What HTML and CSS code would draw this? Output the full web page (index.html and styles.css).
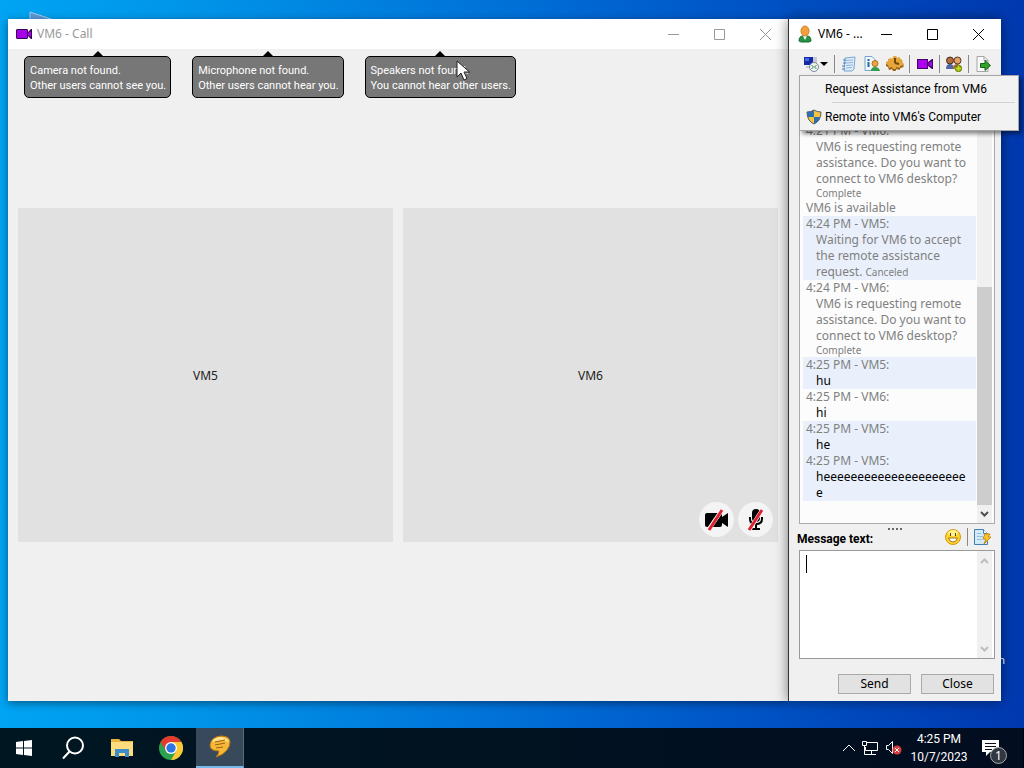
FILE: index.html
```html
<!DOCTYPE html>
<html lang="en">
<head>
<meta charset="utf-8">
<title>VM6 - Call</title>
<link rel="stylesheet" href="styles.css">
</head>
<body>
<main class="desktop">
  <svg class="desk-icon" width="26" height="14" viewBox="0 0 26 14"><path d="M1 13V1l24 8v4z" fill="#5a9bd8" stroke="#a8c8e8"/></svg>
  <span class="desk-label">n</span>

  <section class="window call">
    <header class="titlebar inactive">
      <svg class="app-icon" width="16" height="16" viewBox="0 0 16 16"><path d="M1 3h10l1 1v2l3-3h1v10h-1l-3-3v2l-1 1H1l-1-1V4z" fill="#35004f"/><path d="M1 4h10v8H1zM12 7l3-2v6l-3-2z" fill="#a600e8"/></svg>
      <h1 class="title">VM6 - Call</h1>
      <div class="controls">
        <button aria-label="Minimize"><svg width="11" height="11" viewBox="0 0 11 11"><path d="M0 5.5h11"/></svg></button>
        <button aria-label="Maximize"><svg width="11" height="11" viewBox="0 0 11 11"><path d="M.5.5h10v10H.5z"/></svg></button>
        <button aria-label="Close window"><svg width="11" height="11" viewBox="0 0 11 11"><path d="M0 0l11 11M11 0L0 11"/></svg></button>
      </div>
    </header>
    <div class="call-body">
      <div class="notices">
        <p class="notice">Camera not found.<br>Other users cannot see you.</p>
        <p class="notice">Microphone not found.<br>Other users cannot hear you.</p>
        <p class="notice">Speakers not found.<br>You cannot hear other users.</p>
      </div>
      <div class="tiles">
        <div class="tile">VM5</div>
        <div class="tile">VM6
          <div class="tile-actions">
            <button class="round" aria-label="Camera off"><svg width="36" height="36" viewBox="0 0 36 36"><path d="M8 11h13q2 0 2 2v2l6-4v14l-6-4v2q0 2-2 2H8q-2 0-2-2V13q0-2 2-2z" fill="#000"/><path d="M10 27L23 8" stroke="#fff" stroke-width="4"/><path d="M10 28L23 8" stroke="#e02030" stroke-width="3"/></svg></button>
            <button class="round" aria-label="Microphone off"><svg width="36" height="36" viewBox="0 0 36 36"><rect x="14" y="7" width="8" height="13" rx="4"/><path d="M12 15v2q0 5 6 5t6-5v-2M18 22v5M14 27h8" fill="none" stroke="#000" stroke-width="2"/><path d="M12 27L24 8" stroke="#fff" stroke-width="4"/><path d="M11 28L24 8" stroke="#e02030" stroke-width="3"/></svg></button>
          </div>
        </div>
      </div>
    </div>
  </section>

  <section class="window chat">
    <header class="titlebar">
      <svg class="app-icon" width="16" height="18" viewBox="0 0 16 18"><path d="M2 16q0-5 4-5h4q4 0 4 5l-2 1H4z" fill="#289344" stroke="#176a2d"/><path d="M6 11l2 4 2-4z" fill="#fff"/><ellipse cx="8" cy="6" rx="4" ry="5" fill="#f3a03c" stroke="#c9832c"/></svg>
      <h2 class="title">VM6 - ...</h2>
      <div class="controls">
        <button aria-label="Minimize"><svg width="11" height="11" viewBox="0 0 11 11"><path d="M0 5.5h11"/></svg></button>
        <button aria-label="Maximize"><svg width="11" height="11" viewBox="0 0 11 11"><path d="M.5.5h10v10H.5z"/></svg></button>
        <button aria-label="Close window"><svg width="11" height="11" viewBox="0 0 11 11"><path d="M0 0l11 11M11 0L0 11"/></svg></button>
      </div>
    </header>
    <div class="toolbar">
      <button aria-label="Remote assistance"><svg width="26" height="18" viewBox="0 0 26 18"><path d="M1 2h9v8H1z" fill="#1428a8"/><path d="M2 3h4v3H2z" fill="#3f6be0"/><path d="M10 2h4v9h-4zM3 11h6v2H3z" fill="#c6c8d2"/><circle cx="11" cy="12" r="4.500" fill="#eef3f5" stroke="#7c8d98"/><path d="M8.500 10l2 2-2 2M13.500 10l-2 2 2 2" fill="none" stroke="#3a8a50"/><path d="M17 7h8l-4 4z" fill="#000"/></svg></button>
      <i class="sep"></i>
      <button aria-label="History"><svg width="18" height="18" viewBox="0 0 18 18"><path d="M5 3l10-1-1 12-2 2H4z" fill="#dcecfb" stroke="#7ba6d0"/><path d="M6 5.500l7-.5M6 8l7-.5M6 10.500l7-.5M6 13l6-.5" stroke="#8db5dc"/><path d="M3 5h3M3 8h3M2 11h3M2 14h3" stroke="#4a80b8"/></svg></button>
      <button aria-label="Contact information"><svg width="18" height="18" viewBox="0 0 18 18"><path d="M2 1.500h7l3 3v11H2z" fill="#eef6fd" stroke="#7aa5cf"/><path d="M5.500 4v2M5.500 7v5" stroke="#2764a8" stroke-width="2"/><circle cx="12" cy="8.500" r="3" fill="#eda43c" stroke="#ad701c"/><path d="M8 16q0-4 4-4t5 4z" fill="#349b47"/></svg></button>
      <button aria-label="Options"><svg width="18" height="18" viewBox="0 0 18 18"><path d="M7.500 2h3v2l3-1 1 2 2 1-1 2 2 1v3l-3 1-1 2-3-1-1 2H7l-1-2-3 1-1-3-2-1V8l2-1V5l3-1 1 1z" fill="#9a6012"/><path d="M7.500 1h3v2l3-1 1 2 2 1-1 2 2 1v2l-3 1-1 2-3-1-1 2H7l-1-2-3 1-1-3-2-1V7l2-1V4l3-1 1 1z" fill="#e5a63c"/><path d="M9 8V3M9 8l4 1" stroke="#754609" stroke-width="2"/></svg></button>
      <i class="sep"></i>
      <button aria-label="Video call"><svg width="18" height="18" viewBox="0 0 18 18"><path d="M1 4h11v3l4-3h1v10h-1l-4-3v3H1z" fill="#48006b"/><path d="M2 5h9v8H2zM13 8l3-2v6l-3-2z" fill="#aa00ed"/></svg></button>
      <i class="sep"></i>
      <button aria-label="Add people"><svg width="18" height="18" viewBox="0 0 18 18"><path d="M1 14q0-5 4-5t4 5z" fill="#5267a4"/><path d="M8 14q0-5 4-5t4 5z" fill="#b06e37"/><circle cx="5" cy="5.500" r="3.500" fill="#b26c38" stroke="#44291d"/><circle cx="12.500" cy="5.500" r="3.500" fill="#e4a268" stroke="#5b3521"/><path d="M13.500 10v7M10 13.500h7" stroke="#5c7600" stroke-width="4"/><path d="M13.500 10.500v6M10.500 13.500h6" stroke="#c4dc24" stroke-width="2"/></svg></button>
      <i class="sep"></i>
      <button aria-label="Send file"><svg width="18" height="18" viewBox="0 0 18 18"><path d="M3 1.500h7l4 4v11H3z" fill="#fafafa" stroke="#a5a5a5"/><path d="M10 1.500v4h4" fill="none" stroke="#a5a5a5"/><path d="M6.500 8.500H11v-3l5.500 5-5.500 5v-3H6.500z" fill="#35a02c" stroke="#156518"/></svg></button>
    </div>
    <div class="history">
      <div class="log">
        <article class="msg"><h3>4:21 PM - VM6:</h3><p>VM6 is requesting remote assistance. Do you want to connect to VM6 desktop?</p><small class="status">Complete</small></article>
        <p class="event">VM6 is available</p>
        <article class="msg own"><h3>4:24 PM - VM5:</h3><p>Waiting for VM6 to accept the remote assistance request. <small>Canceled</small></p></article>
        <article class="msg"><h3>4:24 PM - VM6:</h3><p>VM6 is requesting remote assistance. Do you want to connect to VM6 desktop?</p><small class="status">Complete</small></article>
        <article class="msg own said"><h3>4:25 PM - VM5:</h3><p>hu</p></article>
        <article class="msg said"><h3>4:25 PM - VM6:</h3><p>hi</p></article>
        <article class="msg own said"><h3>4:25 PM - VM5:</h3><p>he</p></article>
        <article class="msg own said"><h3>4:25 PM - VM5:</h3><p>heeeeeeeeeeeeeeeeeeeeee</p></article>
      </div>
      <div class="scroll">
        <div class="thumb"></div>
        <svg width="15" height="18" viewBox="0 0 15 18"><path d="M4 7l3.500 3.500L11 7" fill="none" stroke="#505050" stroke-width="2"/></svg>
      </div>
    </div>
    <div class="grip"><i></i><i></i><i></i><i></i></div>
    <div class="compose-head">
      <label for="message">Message text:</label>
      <button aria-label="Insert emoticon"><svg width="18" height="18" viewBox="0 0 18 18"><circle cx="9" cy="9" r="7.500" fill="#ffd22e" stroke="#d39a0c"/><ellipse cx="9" cy="5" rx="5" ry="3" fill="#fff08a"/><path d="M6.500 5v3M11.500 5v3" stroke="#5a3900"/><path d="M4.500 10h9q-1 4-4.500 4t-4.500-4z" fill="#fff" stroke="#a87410"/></svg></button>
      <i class="sep"></i>
      <button aria-label="Quick messages"><svg width="18" height="18" viewBox="0 0 18 18"><path d="M1.500 1.500h9l4 4v11h-13z" fill="#d3e9f8" stroke="#3e80ae"/><path d="M10.500 1.500v4h4" fill="#fff" stroke="#3e80ae"/><path d="M4 5.500h4M4 8.500h6M4 11.500h5" stroke="#91bfe0"/><path d="M12 6h5l-2 3h3l-7 7 2-5h-3z" fill="#ffc62e" stroke="#c98710"/></svg></button>
    </div>
    <div class="compose">
      <textarea id="message"></textarea>
      <i class="caret"></i>
      <div class="scroll ends">
        <svg width="15" height="18" viewBox="0 0 15 18"><path d="M4 12l3.500-3.500L11 12" fill="none" stroke="#bdbdbd" stroke-width="2"/></svg>
        <svg width="15" height="18" viewBox="0 0 15 18"><path d="M4 7l3.500 3.500L11 7" fill="none" stroke="#bdbdbd" stroke-width="2"/></svg>
      </div>
    </div>
    <footer class="actions"><button>Send</button><button>Close</button></footer>

    <div class="menu" role="menu">
      <button role="menuitem"><span class="menu-icon"></span>Request Assistance from VM6</button>
      <hr>
      <button role="menuitem"><span class="menu-icon"><svg width="16" height="16" viewBox="0 0 16 16"><path d="M8 1Q5 3 1 3q0 9 7 12z" fill="#2d6fb5"/><path d="M8 1q3 2 7 2 0 9-7 12z" fill="#f5c43b"/><path d="M8 8h6q-1 5-6 7z" fill="#2d6fb5"/><path d="M8 8H2q1 5 6 7z" fill="#f5c43b"/><path d="M8 1Q5 3 1 3q0 9 7 12 7-3 7-12-4 0-7-2z" fill="none" stroke="#52606c"/></svg></span>Remote into VM6's Computer</button>
    </div>
  </section>

  <svg class="cursor" width="14" height="21" viewBox="0 0 14 21"><path d="M1 1v16l4-4 3 7 3-1.500-3-6.500h5.500z" fill="#fff" stroke="#222"/></svg>
</main>

<nav class="taskbar">
  <button class="task" aria-label="Start"><svg width="16" height="16" viewBox="0 0 16 16" fill="#fff"><path d="M0 2l7-1v6.500H0zM8 1l8-1v7.500H8zM0 8.500h7V15l-7-1zM8 8.500h8V16l-8-1z"/></svg></button>
  <button class="task" aria-label="Search"><svg width="24" height="24" viewBox="0 0 24 24" fill="none" stroke="#fff" stroke-width="2"><circle cx="14" cy="9.500" r="8"/><path d="M8.500 15.500L2 22.500"/></svg></button>
  <button class="task" aria-label="File Explorer"><svg width="22" height="20" viewBox="0 0 22 20"><path d="M0 1h8l2 2h12v15H0z" fill="#e8b53e"/><path d="M0 4h22v14H0z" fill="#fcdc7c"/><path d="M4 11h14v8h-4v-4H8v4H4z" fill="#3b8ec9"/></svg></button>
  <button class="task" aria-label="Chrome"><svg width="24" height="24" viewBox="0 0 24 24"><circle cx="12" cy="12" r="12" fill="#2ca24c"/><path d="M1.600 6A12 12 0 0 1 22.400 6H12L7 15z" fill="#e33b2e"/><path d="M22.400 6A12 12 0 0 1 12 24l5.200-9L12 6z" fill="#fcc934"/><circle cx="12" cy="12" r="6" fill="#fff"/><circle cx="12" cy="12" r="4.700" fill="#2f76e4"/></svg></button>
  <button class="task active" aria-label="Messenger"><svg width="24" height="24" viewBox="0 0 24 24"><path d="M13 1q9 0 9 6 0 4-3 8-4 5-11 7 3-3 3-6-9 0-9-6 1-8 11-9z" fill="#f5b83a" stroke="#b87911"/><path d="M4 7q2-5 9-5 7 1 8 5-8-3-17 0z" fill="#ffe28a"/><path d="M7 7l10-2M7 10l10-2M8 13l7-1" stroke="#9c610a"/></svg></button>
  <div class="tray">
    <svg width="12" height="8" viewBox="0 0 12 8"><path d="M0 7l6-6 6 6" fill="none" stroke="#fff"/></svg>
    <svg width="18" height="16" viewBox="0 0 18 16" fill="none" stroke="#fff"><path d="M5.500 2.500h11v8H4.500V7M10.500 11v3M7 14.500h8M1.500 1.500h4v4h-4zM3.500 6v8.500H7"/></svg>
    <svg width="18" height="16" viewBox="0 0 18 16"><path d="M1.500 5.500h2l4-4v12l-4-4h-2z" fill="none" stroke="#fff"/><circle cx="12" cy="10" r="4.500" fill="#d83b3b"/><path d="M10 8l4 4M14 8l-4 4" stroke="#fff"/></svg>
  </div>
  <time class="clock">4:25 PM<br>10/7/2023</time>
  <div class="notify">
    <svg width="17" height="17" viewBox="0 0 17 17"><path d="M0 0h17v12H8l-4 4v-4H0z" fill="#fff"/><path d="M3 3.500h11M3 6.500h11M3 9.500h7" stroke="#06121e"/></svg>
    <span class="badge">1</span>
  </div>
</nav>
</body>
</html>
```
FILE: styles.css
```css
* { box-sizing: border-box; }
body {
  margin: 0;
  height: 100vh;
  display: flex;
  flex-direction: column;
  overflow: hidden;
  font: 12px/16px "Noto Sans", "Open Sans", sans-serif;
  color: #000;
}
h1, h2, h3, p { margin: 0; font: inherit; }
button { font: inherit; color: inherit; border: 0; padding: 0; background: none; display: flex; align-items: center; justify-content: center; }
svg { display: block; flex: none; }

.desktop {
  position: relative;
  flex: 1;
  background: linear-gradient(to right, #00a4f2 0%, #0093e8 20%, #0072d8 48%, #0057c8 70%, #0038b0 100%);
}
.desk-icon { position: absolute; left: 29px; top: 11px; }
.desk-label { position: absolute; right: 19px; bottom: 60px; color: #fff; font-size: 11px; }
.cursor { position: absolute; left: 456px; top: 60px; }

.window {
  position: absolute;
  top: 19px;
  bottom: 27px;
  display: flex;
  flex-direction: column;
  background: #f0f0f0;
  box-shadow: 0 2px 8px rgba(0, 0, 0, .45);
}
.call { left: 8px; right: 236px; }
.chat { right: 23px; width: 213px; border-left: 1px solid #333; box-shadow: 0 0 12px rgba(0, 0, 0, .5); }

.titlebar { display: flex; align-items: center; height: 30px; background: #fff; padding-left: 8px; }
.inactive { color: #999; }
.title { flex: 1; padding-left: 5px; white-space: nowrap; }
.controls { display: flex; }
.controls button { width: 46px; height: 29px; }
.controls svg { fill: none; stroke: #000; }
.inactive .controls svg { stroke: #999; }

.call-body { flex: 1; display: flex; flex-direction: column; justify-content: center; position: relative; padding: 0 10px; }
.notices { position: absolute; top: 7px; left: 16px; display: flex; gap: 21px; }
.notice {
  position: relative;
  padding: 6px 4px 4px 5px;
  border: 1px solid #000;
  border-radius: 5px;
  background: #777;
  color: #fff;
  font: 11px/15px Roboto, sans-serif;
  white-space: nowrap;
}
.notice::before {
  content: "";
  position: absolute;
  left: 50%;
  top: -6px;
  margin-left: -6px;
  border: 6px solid transparent;
  border-top: 0;
  border-bottom-color: #000;
}
.tiles { display: grid; grid-template-columns: 1fr 1fr; gap: 10px; }
.tile { position: relative; aspect-ratio: 375 / 334; background: #e1e1e1; display: flex; align-items: center; justify-content: center; padding-top: 2px; color: #222; }
.tile-actions { position: absolute; right: 5px; bottom: 5px; display: flex; gap: 4px; }
.round { width: 35px; height: 35px; border-radius: 50%; background: #f4f4f4; }

.toolbar { display: flex; align-items: center; height: 26px; margin-top: 2px; padding: 0 9px 0 14px; justify-content: space-between; }
.sep { width: 1px; height: 18px; background: #888; }

.history { flex: 1; min-height: 0; display: flex; margin: 0 6px 0 10px; border: 1px solid #aaa; padding-right: 2px; background: #fcfcfc; }
.log { flex: 1; display: flex; flex-direction: column; justify-content: flex-end; padding: 0 1px 22px 3px; overflow: hidden; color: #808080; }
.msg, .event { flex: none; padding: 0 4px 0 3px; }
.msg h3 { line-height: 16px; }
.msg p { padding-left: 10px; overflow-wrap: anywhere; }
.msg small { font-size: 10px; }
.msg .status { display: block; padding-left: 10px; line-height: 13px; }
.own { background: #e9f0fb; }
.said p { color: #000; }
.scroll { width: 15px; background: #f0f0f0; display: flex; flex-direction: column; justify-content: flex-end; }
.thumb { height: 49%; background: #cdcdcd; }
.ends { justify-content: space-between; }

.grip { display: flex; justify-content: center; gap: 2px; padding-top: 4px; height: 4px; }
.grip i { flex: none; width: 2px; height: 2px; background: #666; }
.compose-head { display: flex; align-items: flex-start; gap: 5px; height: 22px; padding: 0 10px 0 8px; font: bold 12px/16px Roboto, sans-serif; }
.compose-head label { flex: 1; padding-top: 3px; }
.compose { position: relative; display: flex; height: 109px; margin: 0 6px 0 10px; border: 1px solid #999; padding-right: 2px; background: #fff; }
.compose textarea { flex: 1; min-width: 0; border: 0; resize: none; outline: 0; padding: 5px 7px; font: inherit; background: #fff; }
.caret { position: absolute; left: 6px; top: 4px; width: 1px; height: 18px; background: #000; }
.actions { display: flex; justify-content: flex-end; gap: 10px; padding: 15px 7px 7px; }
.actions button { width: 73px; height: 20px; border: 1px solid #aaa; background: #e2e2e2; }

.menu {
  position: absolute;
  top: 56px;
  left: 10px;
  width: 220px;
  border: 1px solid #a5a5a5;
  background: #f2f2f2;
  font-family: Roboto, sans-serif;
  box-shadow: 3px 3px 4px rgba(0, 0, 0, .45);
}
.menu button { width: 100%; height: 26px; justify-content: flex-start; white-space: nowrap; }
.menu-icon { width: 25px; padding-left: 6px; }
.menu hr { margin: 0 3px 1px 32px; border: 0; height: 1px; background: #d2d2d2; }

.taskbar { display: flex; height: 40px; background: linear-gradient(to right, #001722, #020d20); color: #fff; }
.task { width: 48px; margin-right: 1px; }
.active { background: #37495a; border-bottom: 2px solid #76b9ed; border-right: 1px solid #5c6a76; }
.tray { flex: 1; display: flex; align-items: center; justify-content: flex-end; gap: 6px; }
.clock { width: 72px; text-align: center; font: 12px/18px Roboto, sans-serif; padding-top: 2px; }
.notify { position: relative; width: 49px; display: flex; align-items: center; padding-left: 7px; border-right: 1px solid #001; }
.badge { position: absolute; left: 15px; bottom: 4px; width: 17px; height: 17px; border: 1px solid #aaa; border-radius: 50%; background: #303842; text-align: center; line-height: 15px; }
```
